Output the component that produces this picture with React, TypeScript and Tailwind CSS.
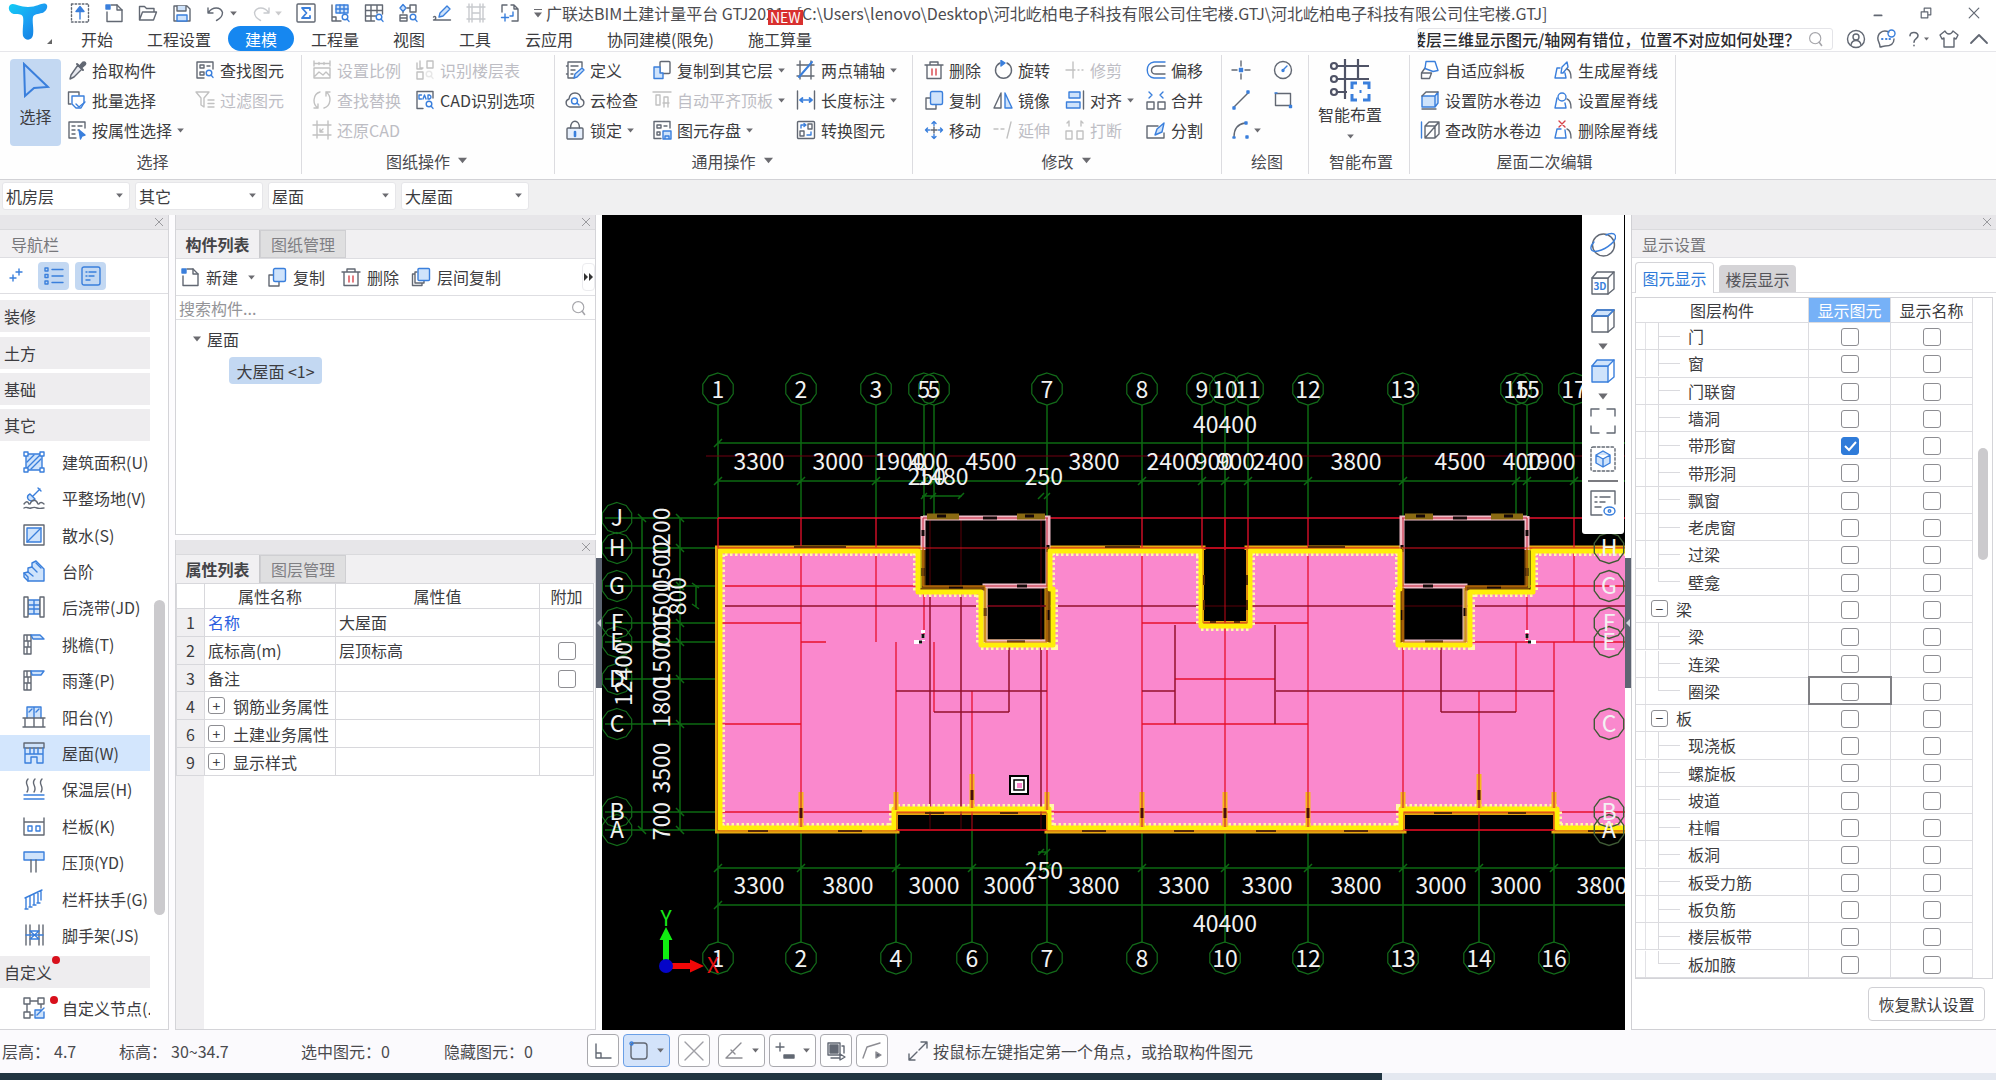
import React from "react";

const G = "#626873";
const B = "#3a7fdc";
const L = "#cfe3fb";
const D = "#c6c6cd";
const R = "#d8434a";

function Svg({ children, className = "h-5 w-5", c = G, vb = "0 0 20 20" }: { children?: React.ReactNode; className?: string; c?: string; vb?: string }) {
  return (
    <svg viewBox={vb} className={"shrink-0 " + className} fill="none" stroke={c} strokeWidth="1.4" strokeLinecap="round" strokeLinejoin="round" aria-hidden="true">
      {children}
    </svg>
  );
}

function Caret({ className = "h-[6px] w-[8px]" }: { className?: string }) {
  return (
    <svg viewBox="0 0 8 6" className={"shrink-0 fill-[#6b6b70] " + className} aria-hidden="true">
      <path d="M0 0.5h8L4 5.5z" />
    </svg>
  );
}

const lens = (x = 14, y = 14, c = B) => (
  <g stroke={c}>
    <circle cx={x} cy={y} r="2.8" fill="#fff" />
    <path d={`M${x + 2} ${y + 2}l2 2.4`} />
  </g>
);

const I: Record<string, React.ReactNode> = {
  upload: <><rect x="1.5" y="1" width="17" height="18" strokeDasharray="1.6 2" /><path d="M10 16v-8M10 3.5l4 5H6z" stroke={B} fill={B} /></>,
  newDoc: <><path d="M7 2h6l5 5v11.5H3V9" /><path d="M13 2v5h5" /><path d="M2 2h4v4H2z" fill={B} stroke={B} /></>,
  open: <><path d="M1.5 17V3.5h5l2 2H16V9M1.5 17l3-8h14l-3 8z" /></>,
  save: <><path d="M2 3h13l3 3v12H2z" /><path d="M5 3v5h9V3" fill={L} /><path d="M5 18v-6h10v6z" fill={L} stroke={B} /></>,
  undo: <path d="M2 5v5h5M2.5 9.5c4-6 12-6 14 0 0 3-2 6-6 8" />,
  redo: <path d="M18 5v5h-5M17.5 9.5c-4-6-12-6-14 0 0 3 2 6 6 8" />,
  sum: <><rect x="1" y="1" width="18" height="18" rx="1" /><path d="M14 7V5H6l4.5 5L6 15h8v-2" stroke={B} strokeWidth="1.8" /></>,
  qGrid: <><path d="M2 2v16h9M2 14h4v4" /><path d="M6 2h12v8H6z" fill={L} stroke={B} /><path d="M6 6h12M10 2v8M14 2v8" stroke={B} />{lens(15, 14)}</>,
  grid: <><path d="M1.5 2h17v9M1.5 2v16h9M1.5 7.5h17M1.5 13h10M7 2v16M13 2v8" />{lens(15, 14)}</>,
  qTree: <><path d="M12 2h6v7h-6zM2 12h7v6H2zM2 15h7" /><path d="M5 1.5l3 3.5-3 3.5L2 5z" fill={L} stroke={B} /><path d="M5 10v-1M9 5h3" />{lens(15, 14)}</>,
  pen: <><path d="M1.5 14c3-2 3 3 0 3h17" /><path d="M7 14l1-4 7-7 3 3-7 7z" stroke={B} fill={L} /></>,
  frame: <path d="M3 1v18M6 1v18M14 1v18M17 1v18M1 4h18M1 16h18M6 10h8" />,
  pageAdd: <><path d="M2 9V2h5M11 2h3l4 4v12h-6M14 2v4h4" /><path d="M5 11v7M1.5 14.5h7M13 9v4h-3" stroke={B} /></>,
  pipette: <><path d="M11 5l4 4-8 8-4 2 1-4z" fill="#e6e8ee" /><path d="M10 4l6 6M12.5 6.5L16 2.5c2-1 3 1 2 2l-4 3.5" fill={G} strokeWidth="2" /></>,
  batch: <><path d="M4 14H1.5V2H12v3" /><path d="M5 6h12v7l-3 5H9l-4-4z" stroke={B} fill="#fff" /><path d="M9 14l3 3 6-5" stroke={B} /></>,
  listPick: <><path d="M9 18H2V2h16v6M5 6h3M5 10h3M5 14h3M11 6h4M11 10h1" /><path d="M12 10l6 5-3 1-1.5 3z" fill={B} stroke={B} /></>,
  findEl: <><path d="M9 18H2V2h16v7M5 5h4v3H5zM5 12h4v3H5zM12 6h3" />{lens(14, 13)}</>,
  filter: <path d="M1 2h13l-5 6v9l-3-2V8zM13 10h6M13 13.5h6M13 17h6" />,
  scale: <path d="M2 1v5M18 1v5M2 3.5h16M7 2.5v2M12 2.5v2M2 8h16v10H2zM3 16l4-4 4 3 3-3 4 4" />,
  swap: <path d="M8 2c-7 2-8 12-2 16M6 14v4H2M12 18c7-2 8-12 2-16M14 6V2h4" />,
  restore: <path d="M5 1v17M1 5h18M16 1v18M1 15h18M8 12l3-3M8 9v3h3" />,
  floors: <><path d="M12 1h6v7h-6zM2 12h6v7H2zM5 1v7h3M2 3v6h5" />{lens(14, 14, D)}</>,
  cad: <><path d="M8 18.500H2v-17h16V8" /><path d="M6.5 5H4v4h2.5M8 9l1.500-4L11 9M13 5h1.500c2 1 2 3 0 4H13z" stroke={B} />{lens(14, 14)}</>,
  define: <><path d="M9 18H3V2h14v5M6 6h7M6 10h4M6 14h2M3 6H1.5M3 14H1.5" /><path d="M9 18l1-4 7-6 2 2-7 7z" stroke={B} fill={L} /></>,
  cloud: <><path d="M5 17c-5-1-5-7-1-8 1-8 11-8 12 0 4 1 4 7-1 8z" /><circle cx="9.5" cy="11" r="3" stroke={B} /><path d="M12 13l2 2" stroke={B} /></>,
  lock: <><rect x="2" y="8" width="16" height="11" rx="1" fill="#e6effc" /><path d="M5.5 8c0-9 9-9 9 0" /><path d="M10 12v4" stroke={B} strokeWidth="2.6" /></>,
  copyTo: <><rect x="8" y="1.5" width="10" height="12" rx="1" /><path d="M8 7H2v11.5h9V13H8z" fill={L} stroke={B} /></>,
  flat: <path d="M1 2h18M4 5v10h4V5zM12 17V7h4v10M11 13h6" />,
  store: <><path d="M9 18.5H2v-17h16V8M5 5h4v3H5zM5 12h3v3H5zM12 6h3" /><path d="M11 11h8v8h-8zM13 19v-3h4v3" fill={L} stroke={B} /></>,
  twoPt: <><path d="M4 1v18M1 5h17M15 1v18M1 16h17" /><path d="M3 17L16 2" stroke={B} strokeWidth="2" /></>,
  length: <><path d="M1.5 1v18M18.5 1v18" /><path d="M4 10h12M6.5 8L4 10l2.5 2M13.5 8l2.5 2-2.5 2" stroke={B} strokeWidth="1.7" /></>,
  convert: <><rect x="1.5" y="1.5" width="17" height="17" rx="1" /><path d="M12 4h4v5h-4zM4 11h4v5H4z" /><path d="M5 8V5h4M15 12v3h-4M8 3.5L10 5 8 6.5" stroke={B} /></>,
  trash: <><path d="M1 5h18M6 5V2h8v3M3 5v13.5h14V5" /><path d="M8 9v6M12 9v6" stroke={R} /></>,
  copy: <><path d="M6 8H2v11h10v-4" /><rect x="6.5" y="1.5" width="12" height="13" rx="1.5" fill={L} stroke={B} /></>,
  move: <><path d="M10 7v6M7 10h6" /><path d="M10 1.5v4M10 14.5v4M1.5 10h4M14.5 10h4M8 3.5l2-2 2 2M8 16.5l2 2 2-2M3.5 8l-2 2 2 2M16.5 8l2 2-2 2" stroke={B} /></>,
  rotate: <><path d="M7 3a8 8 0 1 0 7 0" /><path d="M8 .5L12 3 8 6z" stroke={B} fill={B} /></>,
  mirror: <><path d="M8 3v15H1z" /><path d="M12 3v15h7z" fill={L} stroke={B} /></>,
  extend: <path d="M1 9h4M8 9h3M18 2l-4 16" />,
  trim: <path d="M1 10h9M8 2v16M13 10h1M17 10h1" />,
  align: <><path d="M18.5 1v18" /><path d="M4 2h11v6H4zM1.5 12H15v6H1.5z" fill={L} stroke={B} /></>,
  brk: <path d="M4 1v5M16 1v5M2 3l2-2M18 3l-2-2M1 11h6v8H1zM12 11h6v8h-6z" />,
  offset: <><path d="M19 2H8c-9 1-9 15 0 16h11" stroke={B} /><path d="M19 6h-9c-6 1-6 8 0 8h9" /></>,
  merge: <><path d="M1 12h7v7H1zM12 12h7v7h-7z" /><path d="M3 2l3 3-3 3M17 2l-3 3 3 3" stroke={B} /></>,
  split: <><path d="M12 6H1v12h17v-5" /><path d="M9 15l2-6 7-6-2 9z" fill={L} stroke={B} /></>,
  point: <><path d="M10 1v5M10 14v5M1 10h5M14 10h5" /><path d="M8.5 8.5h3v3h-3z" stroke={B} fill={B} /></>,
  circle: <><circle cx="10" cy="10" r="8.5" /><path d="M10 10l4-4" stroke={B} /><circle cx="10" cy="10.5" r="1" stroke={B} fill={B} /></>,
  line: <><path d="M3 17L17 3" /><path d="M2 17h2v2H2zM16 1h2v2h-2z" stroke={B} fill={B} /></>,
  rect: <><path d="M2.5 3.5h15v12h-15z" /><path d="M2 3h2M16.5 15.5h2v2h-2z" stroke={B} fill={B} /></>,
  arc: <><path d="M3 17C3 8 7 4 14 3" /><path d="M2 17h2v1H2zM14 2h2v2h-2zM15 16h2v2h-2z" stroke={B} fill={B} /></>,
  slab: <><path d="M1.5 13h10l-2 5.5h-8zM1.5 13L5 8" /><path d="M6 1.5h9l3 9-5 1-8-3z" fill="#fff" stroke={B} /></>,
  waterSet: <><path d="M2 6h13v11H2zM15 6l3-4v11l-3 4" fill={L} stroke={B} /><path d="M2 6l4-4h12M2 19h14" /></>,
  waterEdit: <><path d="M5 6h10v12H5zM15 6l4-4v12l-4 4M5 6l4-4h10M5 18L19 2" /><path d="M1.5 2v16" stroke={B} /></>,
  ridgeAdd: <><path d="M2 18l2-10h3M2 18h11l-1-5M8 13l1-6 5-5 1 5-5 6z" stroke={B} /><path d="M14 9c3 1 4 4 4 9" /></>,
  ridgeSet: <><path d="M2 18l2-10M2 18h11l-1-5" stroke={B} /><circle cx="9" cy="7" r="4" stroke={B} /><path d="M14 9c3 1 4 4 4 9" /></>,
  ridgeDel: <><path d="M2 18l2-9h4M2 18h11l-1-8" stroke={B} /><path d="M6 1l6 6M12 1L6 7" stroke={R} /><path d="M14 9c3 1 4 4 4 9" /></>,
  layerCopy: <><path d="M4 7H1.5v11.5H11V16M6 5H4v11h9v-2" /><rect x="7" y="1.5" width="11.5" height="12" rx="1" fill={L} stroke={B} /></>,
};

const NavI: React.ReactNode[] = [
  <><path d="M4 4h16v16H4z" fill={L} /><path d="M5 12l7-7M5 18L18 5M9 19L19 9" /><path d="M2 2h4v4H2zM18 2h4v4h-4zM2 18h4v4H2zM18 18h4v4h-4z" fill="#fff" /></>,
  <><path d="M8 8l5 5c-2 3-6 2-7 0-1-2 0-4 2-5zM11 10l7-7M16 2l3 3" fill={L} /><path d="M2 18c2-3 4-3 5 0M8 18c2-5 6-5 8 0M17 18c1-2 3-2 5 0M2 22c3-2 4 1 7 0s4-1 6 0 5 0 7 0" stroke={G} /></>,
  <><rect x="2" y="2" width="20" height="20" stroke={G} /><path d="M5 5h14v14H5z" fill={L} /><path d="M5 19L19 5" /></>,
  <><path d="M2 18v-4l4-1V9l4-1V4l4-2 8 8v12H6z" fill={L} /><path d="M6 13l5 4M10 8l5 5M14 4l5 5M2 14l4 4v4" /></>,
  <><path d="M6 5h12v14H6zM6 10h12M6 14h12M12 5v14" stroke={B} fill={L} /><path d="M2 2h4v20H2zM18 2h4v20h-4z" stroke={G} fill="#fff" /></>,
  <><path d="M2 3h7v19H2zM2 9h7M2 15h7M5 3v6M6 9v6M5 15v7" stroke={G} /><path d="M9 3h9l4 4H11z" fill={L} /></>,
  <><path d="M2 3h7v19H2zM2 9h7M2 15h7M5 3v6M6 9v6M5 15v7" stroke={G} /><path d="M9 3h13l-3 4h-9z" fill={L} /></>,
  <><path d="M5 13V2h14v11M12 2v11M7 7l3-3M14 7l3-3" fill={L} /><path d="M1 13h22M3 13v9h18v-9M1 22h22M12 13v9" stroke={G} /></>,
  <><path d="M2 7V2h20v5z" stroke={G} fill={L} /><path d="M3 7v15h6v-6h6v6h6V7M3 13h18M8 7v6M12 7v6M16 7v6" /></>,
  <><path d="M6 2c-5 5 3 7-1 13M13 2c-5 5 3 7-1 13M20 2c-5 5 3 7-1 13" stroke={G} /><path d="M2 18h20M2 22h20" /></>,
  <><path d="M2 4v17h20V4M2 8h20" stroke={G} /><path d="M6 12h4v5H6zM14 12h4v5h-4z" /></>,
  <><path d="M2 2h20v8H2z" fill={L} /><path d="M9 10v12M14 10v12" stroke={G} /></>,
  <><path d="M3 11L20 3M4 11v11M8 9v11M12 8v10M16 6v10M19 4v9M3 22h3M7 20h3M11 18h3M15 16h3" /></>,
  <><path d="M4 2v20M8 2v20M17 2v20M21 2v20" stroke={G} /><path d="M8 8l9 8M8 16l9-8M4 12h17M8 8h9M8 16h9" /></>,
  <><path d="M2 2h6v6H2zM16 2h6v6h-6zM2 16h6v6H2zM8 5h8M5 8v8M19 8v4M8 19h3" stroke={G} /><path d="M20 14h-7v8h9v-6M15 19l7-7" fill={L} /></>,
];

type Cmd = { i: string; t: string; off?: boolean; drop?: boolean };
function Tool({ i, t, off, drop }: Cmd) {
  return (
    <button disabled={off} className={"flex h-[30px] items-center gap-1 whitespace-nowrap " + (off ? "text-[#bdbdc4]" : "text-[#3c3c40]")}>
      {off ? (
        <span className="opacity-40 grayscale"><Svg className="h-5 w-[22px]">{I[i]}</Svg></span>
      ) : (
        <Svg className="h-5 w-[22px]">{I[i]}</Svg>
      )}
      <span>{t}</span>
      {drop && <Caret className="ml-px h-[5px] w-[7px]" />}
    </button>
  );
}

function Group({ label, drop, className, children }: { label: string; drop?: boolean; className: string; children: React.ReactNode }) {
  return (
    <section className={"flex shrink-0 flex-col border-r border-[#dcdce0] " + className}>
      <div className="flex h-[92px]">{children}</div>
      <div className={"flex flex-1 items-center justify-center gap-2 text-[#4a4a4e] " + (drop ? "pr-3" : "pl-1")}>
        {label}
        {drop && <Caret className="h-[7px] w-[9px]" />}
      </div>
    </section>
  );
}

function Tick({ label, on }: { label: string; on?: boolean }) {
  return (
    <span className="relative inline-flex h-[18px] w-[18px] align-middle">
      <input type="checkbox" aria-label={label} defaultChecked={on} className="peer h-[18px] w-[18px] appearance-none rounded-[3px] border border-[#8d8d92] bg-white checked:border-[#2f7bd9] checked:bg-[#2f7bd9]" />
      <svg viewBox="0 0 18 18" className="pointer-events-none absolute inset-0 hidden fill-none stroke-white stroke-2 peer-checked:block" aria-hidden="true">
        <path d="M4 9l4 4 7-8" />
      </svg>
    </span>
  );
}

function CloseX({ name }: { name: string }) {
  return (
    <div className="flex h-[15px] shrink-0 items-center justify-end border-b border-[#dadadd] bg-[#e7e6e9] pr-1">
      <button aria-label={"关闭" + name}>
        <svg viewBox="0 0 10 10" className="h-[10px] w-[10px] stroke-[#9a9a9e]" aria-hidden="true"><path d="M1 1l8 8M9 1L1 9" /></svg>
      </button>
    </div>
  );
}

function Lens({ className = "h-4 w-4" }: { className?: string }) {
  return <Svg className={className} c="#a5a5aa"><circle cx="9" cy="9" r="7" /><path d="M14 14l3 4" strokeWidth="2" /></Svg>;
}

/* ---------- header ---------- */

const QAT: [string, boolean?, boolean?][] = [["upload"], ["newDoc"], ["open"], ["save"], ["undo", true], ["redo", true, true], ["sum"], ["qGrid"], ["grid"], ["qTree"], ["pen"], ["frame", false, true], ["pageAdd"]];
const MENUS = ["开始", "工程设置", "建模", "工程量", "视图", "工具", "云应用", "协同建模(限免)", "施工算量"];

function Header() {
  return (
    <header className="flex h-[52px] shrink-0 border-b border-[#e6e6ea] bg-white">
      <button aria-label="主菜单" className="flex w-16 shrink-0 justify-center pt-[3px] pr-1">
        <svg viewBox="0 0 46 42" className="h-[42px] w-[46px]" aria-hidden="true">
          <defs>
            <linearGradient id="lg" x1="0" y1="0" x2="1" y2="1">
              <stop offset="0" stopColor="#12cdf5" />
              <stop offset="0.5" stopColor="#1b9df2" />
              <stop offset="1" stopColor="#1170d8" />
            </linearGradient>
          </defs>
          <path d="M3 2c4-3 8 2 18 2S35-1 39 1c3 2 0 8-4 9-4 1-8 1-9 4-1 5 1 11 0 18-1 6-8 6-10 1-1-6 1-14 0-19-1-3-4-3-8-3C3 11 0 5 3 2z" fill="url(#lg)" />
          <path d="M45 36v5h-5z" fill="#666" />
        </svg>
      </button>
      <div className="flex min-w-0 flex-1 flex-col">
        <div className="flex h-[26px] items-center">
          <div className="flex shrink-0 items-center gap-[14px] pl-[6px]">
            {QAT.map(([k, drop, off]) => (
              <button key={k} aria-label={k} className={"flex items-center " + (off ? "opacity-35" : "")}>
                <Svg className="h-5 w-5">{I[k]}</Svg>
                {drop && <Caret className="ml-1 h-[5px] w-[7px]" />}
              </button>
            ))}
            <button aria-label="自定义工具栏"><svg viewBox="0 0 8 9" className="h-[9px] w-2 fill-[#6b6b70]" aria-hidden="true"><path d="M0 0h8v1H0zM0 3.5h8L4 8.500z" /></svg></button>
          </div>
          <h1 className="min-w-0 flex-1 truncate pl-1 text-[#4c4c50]">
            广联达BIM土建计量平台 GTJ2021 - [C:\Users\lenovo\Desktop\河北屹柏电子科技有限公司住宅楼.GTJ\河北屹柏电子科技有限公司住宅楼.GTJ]
          </h1>
          <div className="flex items-center gap-9 pr-4 text-[#55555a]">
            <button aria-label="最小化"><Svg className="h-3 w-3"><path d="M4 14h12" strokeWidth="3" /></Svg></button>
            <button aria-label="还原"><Svg className="h-3 w-3"><path d="M2 8h11v10H2zM7 8V2h11v11h-5" strokeWidth="2" /></Svg></button>
            <button aria-label="关闭"><Svg className="h-3 w-3"><path d="M2 2l16 16M18 2L2 18" strokeWidth="2" /></Svg></button>
          </div>
        </div>
        <nav className="flex h-[25px] items-center text-[#3c3c40]">
          {MENUS.map((m) => (
            <button key={m} className={m === "建模" ? "h-[25px] rounded-full bg-[#1687f0] px-[17px] text-white" : "h-[25px] px-[17px]"}>{m}</button>
          ))}
          <div className="ml-auto flex items-center pr-[7px]">
            <label className="mr-[13px] flex h-[22px] w-[416px] items-center rounded-[3px] border border-[#e4e4e8] pr-2">
              <input aria-label="搜索帮助" defaultValue="楼层三维显示图元/轴网有错位，位置不对应如何处理？" className="min-w-0 flex-1 indent-[-8px] font-medium text-[#2c2c30] outline-none" />
              <Lens />
            </label>
            <div className="flex items-center gap-[10px]">
              <button aria-label="用户"><Svg><circle cx="10" cy="10" r="8.5" /><circle cx="10" cy="8" r="3" /><path d="M5 16c1-6 9-6 10 0" /></Svg></button>
              <button aria-label="消息"><Svg><path d="M13 3C6 0 1 5 2 11c1 3 2 4 2 7 2 0 3-1 5-1 6 0 9-3 9-7" /><circle cx="15.5" cy="4.5" r="3.5" stroke={B} /><path d="M6 10h.5M10 10h.5M13.5 10h.5" strokeWidth="2" stroke={B} /></Svg></button>
              <button aria-label="帮助" className="flex items-center gap-0.5"><Svg className="h-5 w-4"><path d="M5 6c0-6 10-5 10 0 0 4-5 3-5 8M10 18v.5" strokeWidth="2" /></Svg><Caret className="h-[4px] w-[5px]" /></button>
              <button aria-label="皮肤"><Svg><path d="M6 2L1 6l2 4 2-1v9h10V9l2 1 2-4-5-4c-2 4-6 4-8 0z" /></Svg></button>
              <button aria-label="收起"><Svg><path d="M2 14l8-8 8 8" strokeWidth="1.8" /></Svg></button>
            </div>
          </div>
        </nav>
      </div>
      <span className="absolute top-[10px] left-[768px] h-[15px] bg-[#d8302f] px-[2px] text-[14px] leading-[15px] text-white">NEW</span>
    </header>
  );
}

function Ribbon() {
  return (
    <div className="flex h-[128px] shrink-0 border-b border-[#d2d2d6] bg-[#fefefe] pt-[3px] pb-[5px]">
      <Group label="选择" className="w-[302px]">
        <button className="mt-1 ml-[10px] flex h-[87px] w-[51px] flex-col items-center gap-1.5 rounded-[4px] bg-[#c3d8f2] pt-[3px] text-[#3c3c40]">
          <svg viewBox="0 0 28 36" className="h-9 w-7" fill="#b9d4f7" stroke={B} strokeWidth="2" aria-hidden="true"><path d="M2 2l24 23-14 1-9 8z" /></svg>
          选择
        </button>
        <div className="ml-[5px] w-[128px]">
          <Tool i="pipette" t="拾取构件" /><Tool i="batch" t="批量选择" /><Tool i="listPick" t="按属性选择" drop />
        </div>
        <div><Tool i="findEl" t="查找图元" /><Tool i="filter" t="过滤图元" off /></div>
      </Group>
      <Group label="图纸操作" drop className="w-[253px] pl-[9px]">
        <div className="w-[103px]"><Tool i="scale" t="设置比例" off /><Tool i="swap" t="查找替换" off /><Tool i="restore" t="还原CAD" off /></div>
        <div><Tool i="floors" t="识别楼层表" off /><Tool i="cad" t="CAD识别选项" /></div>
      </Group>
      <Group label="通用操作" drop className="w-[358px] pl-[9px]">
        <div className="w-[87px]"><Tool i="define" t="定义" /><Tool i="cloud" t="云检查" /><Tool i="lock" t="锁定" drop /></div>
        <div className="w-[144px]"><Tool i="copyTo" t="复制到其它层" drop /><Tool i="flat" t="自动平齐顶板" off drop /><Tool i="store" t="图元存盘" drop /></div>
        <div><Tool i="twoPt" t="两点辅轴" drop /><Tool i="length" t="长度标注" drop /><Tool i="convert" t="转换图元" /></div>
      </Group>
      <Group label="修改" drop className="w-[309px] pl-[10px]">
        <div className="w-[69px]"><Tool i="trash" t="删除" /><Tool i="copy" t="复制" /><Tool i="move" t="移动" /></div>
        <div className="w-[72px]"><Tool i="rotate" t="旋转" /><Tool i="mirror" t="镜像" /><Tool i="extend" t="延伸" off /></div>
        <div className="w-[81px]"><Tool i="trim" t="修剪" off /><Tool i="align" t="对齐" drop /><Tool i="brk" t="打断" off /></div>
        <div><Tool i="offset" t="偏移" /><Tool i="merge" t="合并" /><Tool i="split" t="分割" /></div>
      </Group>
      <Group label="绘图" className="w-[87px]">
        <div className="ml-2 w-[42px]"><Tool i="point" t="" /><Tool i="line" t="" /><button aria-label="弧线" className="flex h-[30px] items-center gap-0.5"><Svg className="h-5 w-[22px]">{I.arc}</Svg><Caret className="h-[5px] w-[7px]" /></button></div>
        <div><Tool i="circle" t="" /><Tool i="rect" t="" /></div>
      </Group>
      <Group label="智能布置" className="w-[101px]">
        <button className="flex w-[82px] flex-col items-center pt-[3px] text-[#3c3c40]">
          <svg viewBox="0 0 42 44" className="h-[44px] w-[42px]" fill="none" stroke="#4f5366" strokeWidth="2.2" aria-hidden="true">
            <circle cx="5" cy="8" r="3" /><circle cx="5" cy="21" r="3" /><circle cx="5" cy="34" r="3" />
            <path d="M8 8h32M8 21h32M8 34h10M16 1v40M29 1v20" />
            <path d="M23 31v-6h5M34 25h6v6M40 36v6h-6M28 42h-5v-6M30.500 33.500h2" stroke={B} strokeWidth="3" />
          </svg>
          <span>智能布置</span>
          <Caret className="mt-2 h-[5px] w-[7px]" />
        </button>
      </Group>
      <Group label="屋面二次编辑" className="w-[266px]">
        <div className="ml-[9px] w-[133px]"><Tool i="slab" t="自适应斜板" /><Tool i="waterSet" t="设置防水卷边" /><Tool i="waterEdit" t="查改防水卷边" /></div>
        <div><Tool i="ridgeAdd" t="生成屋脊线" /><Tool i="ridgeSet" t="设置屋脊线" /><Tool i="ridgeDel" t="删除屋脊线" /></div>
      </Group>
    </div>
  );
}

/* ---------- left navigation ---------- */

const NAV = ["建筑面积(U)", "平整场地(V)", "散水(S)", "台阶", "后浇带(JD)", "挑檐(T)", "雨蓬(P)", "阳台(Y)", "屋面(W)", "保温层(H)", "栏板(K)", "压顶(YD)", "栏杆扶手(G)", "脚手架(JS)"];

function Cat({ t, dot }: { t: string; dot?: boolean }) {
  return (
    <div className="flex flex-1 items-center">
      <button className="flex h-8 w-full items-center bg-[#eeedef] pl-1">
        <span className="relative">{t}{dot && <i className="absolute -top-1 left-full h-2 w-2 rounded-full bg-[#d8101c]" />}</span>
      </button>
    </div>
  );
}

function NavItem({ t, n, dot }: { t: string; n: number; dot?: boolean }) {
  return (
    <button className={"flex min-h-0 flex-1 items-center gap-4 overflow-hidden pl-[22px] whitespace-nowrap " + (n === 8 ? "bg-[#d3e6fd]" : "")}>
      <span className="relative">
        <Svg className="h-6 w-6" vb="0 0 24 24" c={B}>{NavI[n]}</Svg>
        {dot && <i className="absolute top-0 left-7 h-2 w-2 rounded-full bg-[#d8101c]" />}
      </span>
      {t}
    </button>
  );
}

function NavPanel() {
  return (
    <aside className="flex w-[169px] shrink-0 flex-col border-r border-b border-[#d4d4d8] bg-white">
      <CloseX name="导航栏" />
      <div className="flex h-7 shrink-0 items-center border-b border-[#dedee2] bg-[#f1f0f2] pl-[11px] text-[#77777b]">导航栏</div>
      <div className="flex h-9 shrink-0 items-center gap-[6px] border-b border-[#dedee2] pl-[6px]">
        <button aria-label="添加" className="w-[26px]"><Svg c={B}><path d="M13 3v6M10 6h6M7 9v6M4 12h6" /></Svg></button>
        <button aria-label="列表" className="flex h-7 w-[31px] items-center justify-center rounded-[4px] bg-[#c3d8f2]"><Svg c={B}><path d="M1 2h3v3H1zM1 8.500h3v3H1zM1 15h3v3H1zM8 3.500h11M8 10h11M8 16.500h11" /></Svg></button>
        <button aria-label="图文" className="flex h-7 w-[31px] items-center justify-center rounded-[4px] bg-[#c3d8f2]"><Svg c={B}><rect x="1" y="1" width="18" height="18" rx="2" /><path d="M5 6h1M8 6h7M5 10h1M8 10h5M5 14h4" /></Svg></button>
      </div>
      <div className="flex min-h-0 flex-1 pt-1 pb-[3px]">
        <div className="flex w-[150px] flex-col text-[#3c3c40]">
          <Cat t="装修" /><Cat t="土方" /><Cat t="基础" /><Cat t="其它" />
          {NAV.map((t, n) => <NavItem key={t} t={t} n={n} />)}
          <Cat t="自定义" dot />
          <NavItem t="自定义节点(." n={14} dot />
        </div>
        <div className="flex flex-1 flex-col items-center pt-[302px]">
          <div className="h-[315px] w-[11px] rounded-full bg-[#cbcacd]" />
        </div>
      </div>
    </aside>
  );
}

/* ---------- component list / properties ---------- */

function Tabs({ a, b }: { a: string; b: string }) {
  return (
    <div role="tablist" className="flex h-7 shrink-0 bg-[#f1f0f2]">
      <button role="tab" aria-selected="true" className="w-[84px] border-r border-[#c9c9cc] font-bold text-[#444448]">{a}</button>
      <button role="tab" aria-selected="false" className="w-[86px] border border-[#cfcfd2] bg-[#dfdfe0] text-[#808084]">{b}</button>
    </div>
  );
}

const PROPS: [number, string, string, boolean?, boolean?][] = [
  [1, "名称", "大屋面"],
  [2, "底标高(m)", "层顶标高", true],
  [3, "备注", "", true],
  [4, "钢筋业务属性", "", false, true],
  [6, "土建业务属性", "", false, true],
  [9, "显示样式", "", false, true],
];

function Expander({ sign }: { sign: string }) {
  return <button aria-label="展开或折叠" className="flex h-[17px] w-[17px] shrink-0 items-center justify-center rounded-[3px] border border-[#8d8d92] text-[14px] leading-none">{sign}</button>;
}

function Middle() {
  return (
    <div className="flex w-[421px] shrink-0 flex-col gap-[5px]">
      <section className="flex h-[320px] shrink-0 flex-col border border-t-0 border-[#d4d4d8] bg-white">
        <CloseX name="构件列表" />
        <Tabs a="构件列表" b="图纸管理" />
        <div className="flex h-[38px] shrink-0 items-center border-t border-b border-[#dedee2] pl-1 text-[#3c3c40]">
          <button className="mr-3 flex items-center gap-1.5"><Svg className="h-5 w-5">{I.newDoc}</Svg>新建<Caret className="ml-1 h-[5px] w-[7px]" /></button>
          <button className="mr-4 flex items-center gap-1.5"><Svg className="h-5 w-5">{I.copy}</Svg>复制</button>
          <button className="mr-3 flex items-center gap-1.5"><Svg className="h-5 w-5">{I.trash}</Svg>删除</button>
          <button className="flex items-center gap-1.5"><Svg className="h-5 w-5">{I.layerCopy}</Svg>层间复制</button>
          <button aria-label="更多" className="ml-auto flex h-7 w-[13px] items-center justify-center rounded border border-[#ececef]"><svg viewBox="0 0 10 8" className="h-2 w-[10px] fill-[#333]" aria-hidden="true"><path d="M0 0l4 4-4 4zM5 0l4 4-4 4z" /></svg></button>
        </div>
        <label className="flex h-6 shrink-0 items-center border-b border-[#dedee2] pr-2 pl-[3px]">
          <input aria-label="搜索构件" placeholder="搜索构件..." className="min-w-0 flex-1 outline-none placeholder:text-[#949498]" />
          <Lens />
        </label>
        <div className="pt-[6px] text-[#3c3c40]">
          <div className="flex h-[26px] items-center gap-[6px] pl-[17px]"><Caret />屋面</div>
          <button className="mt-[5px] ml-[53px] h-[27px] w-[93px] rounded-[4px] bg-[#c3d8f2]">大屋面 &lt;1&gt;</button>
        </div>
      </section>
      <section className="flex min-h-0 flex-1 flex-col border border-t-0 border-[#d4d4d8] bg-white">
        <CloseX name="属性列表" />
        <Tabs a="属性列表" b="图层管理" />
        <table className="h-[193px] w-[418px] shrink-0 table-fixed border-collapse text-[#3c3c40] [&_td]:border [&_td]:border-[#d8d8dc] [&_td]:p-0 [&_td]:px-[3px] [&_th]:border [&_th]:border-[#d8d8dc] [&_th]:font-normal">
          <colgroup><col className="w-[28px]" /><col className="w-[131px]" /><col /><col className="w-[54px]" /></colgroup>
          <thead><tr><th /><th>属性名称</th><th>属性值</th><th>附加</th></tr></thead>
          <tbody>
            {PROPS.map(([n, k, v, chk, ex]) => (
              <tr key={n}>
                <td className="bg-[#f0eff1] text-center">{n}</td>
                <td className={n === 1 ? "text-[#2b5fe0]" : ""}>{ex ? <span className="flex items-center gap-2"><Expander sign="+" />{k}</span> : k}</td>
                <td>{v}</td>
                <td className="text-center leading-none">{chk && <Tick label={"附加" + k} />}</td>
              </tr>
            ))}
          </tbody>
        </table>
        <div className="w-[28px] flex-1 bg-[#f0eff1]" />
      </section>
    </div>
  );
}

/* ---------- drawing area ---------- */

const TOP: [number, string][] = [[718, "1"], [801, "2"], [876, "3"], [924, "5"], [934, "5"], [1047, "7"], [1142, "8"], [1202, "9"], [1225, "10"], [1248, "11"], [1308, "12"], [1403, "13"], [1516, "15"], [1527, "15"], [1574, "17"]];
const BOT: [number, string][] = [[718, "1"], [801, "2"], [896, "4"], [972, "6"], [1047, "7"], [1142, "8"], [1225, "10"], [1308, "12"], [1403, "13"], [1479, "14"], [1554, "16"]];
const LEFT: [number, string][] = [[518, "J"], [548, "H"], [586, "G"], [623, "F"], [642, "E"], [679, "D"], [724, "C"], [812, "B"], [830, "A"]];
const RIGHT = LEFT.filter(([, t]) => t !== "J" && t !== "D");
const TEXTS: [number, number, string][] = [
  [1225, 433, "40400"], [759, 470, "3300"], [838, 470, "3000"], [900, 470, "1900"], [929, 470, "400"], [991, 470, "4500"], [1094, 470, "3800"], [1172, 470, "2400"], [1214, 470, "900"], [1236, 470, "900"], [1278, 470, "2400"], [1356, 470, "3800"], [1460, 470, "4500"], [1522, 470, "400"], [1550, 470, "1900"],
  [927, 485, "250"], [943, 485, "1480"], [1044, 485, "250"],
  [759, 894, "3300"], [848, 894, "3800"], [934, 894, "3000"], [1009, 894, "3000"], [1044, 879, "250"], [1094, 894, "3800"], [1184, 894, "3300"], [1267, 894, "3300"], [1356, 894, "3800"], [1441, 894, "3000"], [1516, 894, "3000"], [1602, 894, "3800"], [1225, 932, "40400"],
];
const VTEXTS: [number, number, string][] = [[662, 533, "1200"], [662, 567, "1500"], [662, 605, "1500"], [662, 632, "700"], [662, 660, "1500"], [662, 702, "1800"], [662, 768, "3500"], [662, 821, "700"], [678, 596, "800"], [624, 674, "12400"]];

const ROOF = "M720 551H918V592H981V645H1053V589H1050V551H1201V626H1250V551H1400V589H1398V645H1470V592H1533V551H1640V828H1557V809H1401V828H1049V809H894V828H720Z";
const WALL = "M717.5 548H923V586H985V642H1047V548H1203V623H1247V548H1403V586V642H1466V586H1527V548H1640V831H1554V813H1404V831H1047V813H897V831H717.5Z";

function ring(cx: number, cy: number, r: number) {
  return Array.from({ length: 10 }, (_, k) => {
    const a = (Math.PI * (k * 36 - 90)) / 180;
    return `${(cx + r * Math.cos(a)).toFixed(1)},${(cy + r * Math.sin(a)).toFixed(1)}`;
  }).join(" ");
}

function Block({ x, m }: { x: number; m?: boolean }) {
  return (
    <g transform={m ? `translate(${x} 0) scale(-1 1)` : `translate(${x} 0)`}>
      <path d="M0 518H125V586H62V642H125" stroke="#f0bcc8" strokeWidth="5" />
      <path d="M0 516V550" stroke="#f0bcc8" strokeWidth="5" />
      <path d="M0 518H125M124 518V586M62 586H125M0 518V550" stroke="#c22038" strokeWidth="1" />
      <path d="M62 588V642" stroke="#c9a23c" strokeWidth="3" />
      <path d="M0 550V588H62M125 588V642" stroke="#7c4a08" strokeWidth="5" />
      <path d="M-2 550V588" stroke="#b5a012" strokeWidth="2" />
      <path d="M4 516.5H36M94 516.5H122" stroke="#8a6a12" strokeWidth="6" />
      <path d="M14 516H23M102 516H111M60 518H74M0 530V536M0 568V576M26 587H40M94 586H104M62 608V616M125 610V620M84 642H102M125 545V552" stroke="#150808" strokeWidth="3" />
      <path d="M0 548H125" stroke="#e01020" strokeWidth="1" />
      <path d="M0 630V641" stroke="#fff" strokeWidth="4" strokeDasharray="3 2" />
      <path d="M-9 642H-1" stroke="#fff" strokeWidth="4" />
      <path d="M-4 642h3M0 634v4" stroke="#111" strokeWidth="3" />
    </g>
  );
}

function Drawing() {
  return (
    <svg viewBox="602 215 1023 815" preserveAspectRatio="xMinYMin slice" className="h-full w-full bg-black" fill="none" role="img" aria-label="屋面平面图">
      <clipPath id="roofClip"><path d={ROOF} /></clipPath>
      <g stroke="#0c6a12" strokeWidth="1.5">
        {TOP.map(([x], k) => <path key={k} d={`M${x} 405V518M${x - 4} 485l8-8`} />)}
        {BOT.map(([x], k) => <path key={k} d={`M${x} 830V943M${x - 4} 872l8-8`} />)}
        {LEFT.map(([y], k) => <path key={k} d={`M605 ${y}H718M676 ${y - 4}l8 8`} />)}
        <path d="M718 443H1640M718 481H1640M718 868H1640M718 905H1640M642 518V830M680 518V830M696 586V607M692 583l7 5M692 604l7 5M714 447l8-8M714 909l8-8M638 514l8 8M638 826l8 8M922 496H962M921 499l6-6M930 499l6-6M958 499l6-6M1038 499l6-6M1044 499l6-6M1038 855l6-6M1044 855l6-6M1038 852h10" />
      </g>
      <path d="M706 456H1640" stroke="#700010" />
      <path d={WALL} stroke="#e8a812" strokeWidth="5" />
      <path d={ROOF} fill="#fa88cd" />
      <g stroke="#e8102c" strokeWidth="1.3">
        <path d="M718 518H1640M718 548H1640M718 586H923M1527 586H1640M718 623H801M1142 623H1308M801 642H826M1466 642H1640M1175 679H1275M718 724H801M1142 724H1308M718 812H1640M718 830H1640" />
        <path d="M718 518V548M801 518V830M876 518V642M924 592V634M896 642V830M934 642V712M972 691V830M1047 645V830M1142 518V830M1202 518V623M1225 518V830M1248 518V623M1308 518V830M1403 518V830M1527 592V642M1574 518V642M1516 642V712M1554 642V830M1479 691V830" />
      </g>
      <g stroke="#94102c" strokeWidth="1.5">
        <path d="M722 606H1640M896 691H1047M1142 691H1175M1276 691H1554M934 712H1009M1441 712H1516" />
        <path d="M930 592V830M961 592V830M1009 645V712M1041 645V830M1175 625V724M1275 625V724M1441 645V712" />
      </g>
      <path d="M923 518H1047V586H985V642H1047V586H923ZM985 586H1047V642H985ZM1403 518H1527V586H1403ZM1403 586H1466V642H1403ZM1204 550H1246V621H1204ZM898 815H1046V829H898ZM1405 815H1553V829H1405Z" fill="#000" />
      <path d="M930 520V586M961 520V586M1041 520V642M985 606H1047M1403 606H1466M1204 606H1246M930 815V829M961 815V829M1041 815V829" stroke="#5a0008" />
      <path d="M1225 518V625M1204 548H1246M898 830H1046M1405 830H1553M972 815V830M1479 815V830" stroke="#c00818" />
      <Block x={923} />
      <Block x={1527} m />
      <path d={ROOF} stroke="#fff9a8" strokeWidth="10" strokeDasharray="2.5 2.5" clipPath="url(#roofClip)" />
      <path d={ROOF} stroke="#ffee08" strokeWidth="5" strokeLinejoin="round" />
      <path d={WALL} stroke="#d47808" strokeWidth="1" />
      <path d="M801 792V827M896 792V810M972 774V808M1047 792V810M1142 792V827M1225 792V827M1308 792V827M1403 792V808M1479 774V808M1554 792V808" stroke="#f8b81c" strokeWidth="5" />
      <path d="M801 792V827M896 792V810M972 774V808M1047 792V810M1142 792V827M1225 792V827M1308 792V827M1403 792V808M1479 774V808M1554 792V808" stroke="#c2182a" strokeWidth="1" />
      <path d="M801 808V818M972 790V800M1142 808V818M1225 808V818M1308 808V818M1479 790V800" stroke="#4a0c10" strokeWidth="3" />
      <path d="M748 831H768M838 831H862M1082 831H1106M1174 831H1194M1256 831H1276M1344 831H1368M925 813H944M1000 813H1018M1434 813H1452M1508 813H1526M794 547H846M1105 547H1140M1308 547H1345M1588 831H1610M1204 575V585M1247 575V585M1204 600V610M1247 600V610M1210 622H1216M1234 622H1240" stroke="#5a2a08" strokeWidth="2" />
      <g stroke="#136b1a" strokeWidth="1.2">
        {TOP.map(([x], k) => <polygon key={k} points={ring(x, 389, 16)} />)}
        {BOT.map(([x], k) => <polygon key={k} points={ring(x, 958, 16)} />)}
        {LEFT.map(([y], k) => <polygon key={k} points={ring(617, y, 15.5)} />)}
      </g>
      <g stroke="#3f5a35" strokeWidth="1.4">
        {RIGHT.map(([y], k) => <polygon key={k} points={ring(1609, y, 15.5)} />)}
      </g>
      <g fill="#f2f2f2" fontSize="23" textAnchor="middle" className="font-['Noto_Sans_CJK_SC',sans-serif]">
        {TOP.map(([x, t], k) => <text key={k} x={x} y="398">{t}</text>)}
        {BOT.map(([x, t], k) => <text key={k} x={x} y="967">{t}</text>)}
        {LEFT.map(([y, t], k) => <text key={k} x="617" y={y + 8}>{t}</text>)}
        {RIGHT.map(([y, t], k) => <text key={k} x="1609" y={y + 8}>{t}</text>)}
        {TEXTS.map(([x, y, t], k) => <text key={k} x={x} y={y}>{t}</text>)}
        {VTEXTS.map(([x, y, t], k) => <text key={k} x={x} y={y} transform={`rotate(-90 ${x} ${y})`} dy="8">{t}</text>)}
        <text x="666" y="926" fill="#18e818" fontSize="21">Y</text>
        <text x="713" y="973" fill="#e81010" fontSize="21">X</text>
      </g>
      <path d="M663 962V940H659.500L666 927l6.5 13H669V962z" fill="#10ee10" />
      <path d="M672 963H690V959.500L704 966l-14 6.5V969H672z" fill="#f00808" />
      <circle cx="666" cy="966" r="7" fill="#0505c8" />
      <path d="M1010 776h18v18h-18z" fill="#fff" stroke="#000" strokeWidth="2" />
      <path d="M1014 780h10v10h-10z" fill="#fff" stroke="#000" strokeWidth="1.5" />
      <path d="M1017 783h5v5h-5z" fill="#fa88cd" />
    </svg>
  );
}

const cube = (fill: string, side: string) => (
  <><path d="M2 8h16v16H2z" fill={fill} /><path d="M2 8l5-6h17l-6 6z" fill={side} /><path d="M18 24l6-5V2" /></>
);

function ViewBar() {
  return (
    <div className="absolute top-0 right-px flex h-[319px] w-[42px] flex-col items-center rounded-b-[3px] bg-white pt-[17px]">
      <button aria-label="动态观察" className="h-[26px]"><Svg vb="0 0 26 26" className="h-[26px] w-[26px]"><circle cx="13.5" cy="13" r="11" /><path d="M4 10c-5 5-4 11 4 9 9-2 20-11 17-16-1-2-5-2-9 0" stroke={B} /></Svg></button>
      <button aria-label="三维" className="mt-3 h-[26px]"><Svg vb="0 0 26 26" className="h-[26px] w-[26px]">{cube("#fff", "#fff")}<text x="10" y="20" fontSize="10" fontWeight="700" textAnchor="middle" fill={B} stroke="none">3D</text></Svg></button>
      <button aria-label="俯视" className="mt-3 h-[26px]"><Svg vb="0 0 26 26" className="h-[26px] w-[26px]">{cube("#fff", L)}<path d="M2 8l5-6h17l-6 6z" stroke={B} /></Svg></button>
      <Caret className="mt-[9px] h-[7px] w-[10px]" />
      <button aria-label="实体" className="mt-2 h-[26px]"><Svg vb="0 0 26 26" className="h-[26px] w-[26px]" c={B}>{cube(L, L)}</Svg></button>
      <Caret className="mt-[9px] h-[7px] w-[10px]" />
      <button aria-label="全屏" className="mt-2 h-[26px]"><Svg vb="0 0 26 26" className="h-[26px] w-[26px]"><path d="M1 8V1h8M17 1h8v7M25 18v7h-8M9 25H1v-7" /></Svg></button>
      <button aria-label="局部三维" className="mt-3 h-[26px]"><Svg vb="0 0 26 26" className="h-[26px] w-[26px]"><rect x="1" y="1" width="24" height="24" rx="2" strokeDasharray="2.5 2" /><path d="M13 5l7 4v8l-7 4-7-4V9zM6 9l7 4 7-4M13 13v8" stroke={B} fill={L} /></Svg></button>
      <div className="mt-2 h-[2px] w-[30px] shrink-0 bg-[#7b7b80]" />
      <button aria-label="显示设置" className="mt-2 h-[26px]"><Svg vb="0 0 26 26" className="h-[26px] w-[26px]"><path d="M12 25H1V1h24v13M5 7h2M10 7h10M5 12h2M10 12h5M5 17h6" /><ellipse cx="19.5" cy="21" rx="5.5" ry="4" stroke={B} fill="#fff" /><circle cx="19.5" cy="21" r="1.3" stroke={B} /></Svg></button>
    </div>
  );
}

/* ---------- display settings ---------- */

const LAYERS = ["门", "窗", "门联窗", "墙洞", "带形窗", "带形洞", "飘窗", "老虎窗", "过梁", "壁龛", "-梁", "梁", "连梁", "圈梁", "-板", "现浇板", "螺旋板", "坡道", "柱帽", "板洞", "板受力筋", "板负筋", "楼层板带", "板加腋"];

function Settings() {
  return (
    <aside className="flex w-[365px] shrink-0 flex-col border-b border-l border-[#d0d0d4] bg-white">
      <CloseX name="显示设置" />
      <div className="flex h-7 shrink-0 items-center border-b border-[#dedee2] bg-[#f1f0f2] pl-[10px] text-[#77777b]">显示设置</div>
      <div role="tablist" className="flex h-[35px] shrink-0 items-end gap-[5px] border-b border-[#dcdce0] pl-[3px]">
        <button role="tab" aria-selected="true" className="-mb-px h-[31px] w-[79px] rounded-t-[4px] border border-b-0 border-[#d4d4d8] bg-white text-[#2f7bd9]">图元显示</button>
        <button role="tab" aria-selected="false" className="h-[27px] w-[77px] rounded-t-[4px] bg-[#d5d4d7] text-[#55555a]">楼层显示</button>
      </div>
      <div className="mt-1 mr-[3px] ml-[3px] flex min-h-0 flex-1 border border-[#d4d4d8]">
        <table className="h-full flex-1 table-fixed border-collapse text-[#3c3c40] [&_td]:border-r [&_td]:border-b [&_td]:border-[#dcdce0] [&_td]:p-0 [&_th]:border-r [&_th]:border-b [&_th]:border-[#dcdce0] [&_th]:p-0 [&_th]:font-normal">
          <colgroup><col /><col className="w-[82px]" /><col className="w-[82px]" /></colgroup>
          <thead><tr><th>图层构件</th><th className="bg-[#76b1f7] text-white">显示图元</th><th>显示名称</th></tr></thead>
          <tbody>
            {LAYERS.map((raw, k) => {
              const g = raw.startsWith("-");
              const t = g ? raw.slice(1) : raw;
              const last = k === LAYERS.length - 1 || LAYERS[k + 1].startsWith("-");
              return (
                <tr key={k}>
                  <td>
                    <span className="flex h-[26px] items-stretch">
                      <i className="w-[10px] border-r border-[#e2e2e6]" />
                      {g ? (
                        <span className="flex items-center gap-2 pl-[5px]"><Expander sign="−" />{t}</span>
                      ) : (
                        <>
                          <i className={"ml-[12px] w-[22px] border-l border-[#dadade] " + (last ? "h-1/2 border-b" : "bg-[linear-gradient(#dadade,#dadade)] bg-[length:100%_1px] bg-center bg-no-repeat")} />
                          <span className="pl-[8px] leading-[26px]">{t}</span>
                        </>
                      )}
                    </span>
                  </td>
                  <td className={"text-center leading-none " + (k === 13 ? "outline-2 -outline-offset-1 outline-[#808084]" : "")}><Tick label={"显示图元 " + t} on={k === 4} /></td>
                  <td className="text-center leading-none"><Tick label={"显示名称 " + t} /></td>
                </tr>
              );
            })}
          </tbody>
        </table>
        <div className="flex w-[19px] shrink-0 flex-col items-center pt-[150px]"><div className="h-[112px] w-[10px] rounded-full bg-[#cbcacd]" /></div>
      </div>
      <div className="flex h-[50px] shrink-0 items-center justify-end pr-[11px]">
        <button className="h-[34px] w-[117px] rounded-[4px] border border-[#d0d0d4] bg-white text-[#3c3c40]">恢复默认设置</button>
      </div>
    </aside>
  );
}

function Handle() {
  return (
    <div className="flex w-[6px] shrink-0 items-center bg-white">
      <button aria-label="折叠面板" className="flex h-[130px] w-full items-center justify-center bg-[#5d6472]"><svg viewBox="0 0 4 8" className="h-2 w-1 fill-[#cfd3da]" aria-hidden="true"><path d="M4 0v8L0 4z" /></svg></button>
    </div>
  );
}

function StatusBar() {
  const btn = "flex h-[33px] items-center justify-center rounded-[4px] border border-[#a9a9ae] bg-white";
  return (
    <footer className="flex h-[43px] shrink-0 items-center bg-[#fbfafd] pb-[2px] text-[#4a4a4e]">
      <dl className="flex w-[587px] shrink-0 pl-[2px] whitespace-nowrap">
        <div className="flex w-[117px] gap-1"><dt>层高：</dt><dd>4.7</dd></div>
        <div className="flex w-[182px] gap-1"><dt>标高：</dt><dd>30~34.7</dd></div>
        <div className="flex w-[143px]"><dt>选中图元：</dt><dd>0</dd></div>
        <div className="flex"><dt>隐藏图元：</dt><dd>0</dd></div>
      </dl>
      <div className="flex items-center gap-1">
        <button aria-label="正交" className={btn + " w-8"}><Svg><path d="M3 3v14h15M3 12h5v5" /></Svg></button>
        <button aria-label="捕捉" className="mr-1 flex h-[33px] w-[47px] items-center justify-center gap-2 rounded-[4px] border border-[#6a9fe6] bg-[#d3e3fa]"><Svg><rect x="2" y="2" width="16" height="16" rx="3" /><circle cx="2.5" cy="2.5" r="1.5" stroke={B} /></Svg><Caret className="h-[5px] w-[7px]" /></button>
        <button aria-label="交点" className={btn + " mr-1 w-8"}><Svg c="#a0a0a6"><path d="M1 1l18 18M19 1L1 19" /></Svg></button>
        <button aria-label="角度" className={btn + " w-[47px] gap-2"}><Svg c="#8d8d93"><path d="M17 2L2 17h16M7 9l4 4" /></Svg><Caret className="h-[5px] w-[7px]" /></button>
        <button aria-label="偏移" className={btn + " w-[47px] gap-2"}><Svg><path d="M5 2v8M1 6h8" /><path d="M9 14h10v3H9z" fill={G} /></Svg><Caret className="h-[5px] w-[7px]" /></button>
        <button aria-label="图层" className={btn + " w-8"}><Svg><path d="M2 2h12v12H2z" /><path d="M4 4h8v8H4z" fill={G} /><path d="M16 5h2v7M5 17h8M14 13l5 3-5 3z" /></Svg></button>
        <button aria-label="折线" className={btn + " w-8"}><Svg c="#8d8d93"><path d="M1 17L5 6l13-4" /><path d="M14 11l5 3-5 3z" fill={G} /></Svg></button>
      </div>
      <p className="ml-5 flex items-center gap-[5px] whitespace-nowrap"><Svg><path d="M11 9l8-8M13 1h6v6M9 11l-8 8M1 13v6h6" /></Svg>按鼠标左键指定第一个角点，或拾取构件图元</p>
    </footer>
  );
}

export default function App() {
  return (
    <div className="relative flex h-screen flex-col overflow-hidden bg-[#fdfcfe] font-['Noto_Sans_CJK_SC','Noto_Sans',sans-serif] text-[16px] leading-6">
      <Header />
      <Ribbon />
      <div className="flex h-[35px] shrink-0 items-center gap-[5px] bg-[#f0f0f1] pb-1 pl-[2px]">
        {["机房层", "其它", "屋面", "大屋面"].map((s) => (
          <div key={s} className="relative flex w-[128px] items-center">
            <select aria-label={s} className="h-7 w-full appearance-none rounded-[3px] border border-[#e6e6e9] bg-white pl-[3px] text-[#3c3c40]"><option>{s}</option></select>
            <Caret className="pointer-events-none absolute right-[7px] h-[5px] w-[7px]" />
          </div>
        ))}
      </div>
      <main className="flex min-h-0 flex-1">
        <NavPanel />
        <div className="w-[6px] shrink-0" />
        <Middle />
        <Handle />
        <div className="relative min-w-0 flex-1 overflow-hidden bg-black"><Drawing /><ViewBar /></div>
        <Handle />
        <Settings />
      </main>
      <StatusBar />
      <div className="flex h-[7px] shrink-0"><div className="flex-9 bg-[#213541]" /><div className="flex-4 bg-[#e4e8f0]" /></div>
    </div>
  );
}
